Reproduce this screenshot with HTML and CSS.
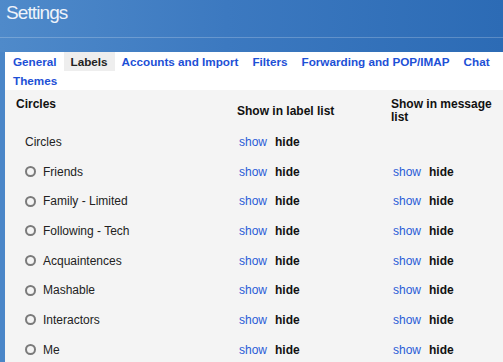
FILE: index.html
```html
<!DOCTYPE html>
<html>
<head>
<meta charset="utf-8">
<link rel="stylesheet" href="styles.css">
</head>
<body>
<div class="header">
  <div class="title-bar"><span class="title">Settings</span></div>
</div>
<div class="panel">
  <div class="tabs">
    <span class="tab">General</span>
    <span class="tab active">Labels</span>
    <span class="tab">Accounts and Import</span>
    <span class="tab">Filters</span>
    <span class="tab">Forwarding and POP/IMAP</span>
    <span class="tab">Chat</span>
    <span class="tab">Themes</span>
  </div>
  <div class="content">
    <div class="grid head">
      <div class="h-name">Circles</div>
      <div class="h-col">Show in label list</div>
      <div class="h-col">Show in message list</div>
    </div>
    <div class="grid row">
      <div class="name plain">Circles</div>
      <div class="acts"><span class="show">show</span><span class="hide">hide</span></div>
      <div class="acts"></div>
    </div>
    <div class="grid row">
      <div class="name"><span class="radio"></span>Friends</div>
      <div class="acts"><span class="show">show</span><span class="hide">hide</span></div>
      <div class="acts"><span class="show">show</span><span class="hide">hide</span></div>
    </div>
    <div class="grid row">
      <div class="name"><span class="radio"></span>Family - Limited</div>
      <div class="acts"><span class="show">show</span><span class="hide">hide</span></div>
      <div class="acts"><span class="show">show</span><span class="hide">hide</span></div>
    </div>
    <div class="grid row">
      <div class="name"><span class="radio"></span>Following - Tech</div>
      <div class="acts"><span class="show">show</span><span class="hide">hide</span></div>
      <div class="acts"><span class="show">show</span><span class="hide">hide</span></div>
    </div>
    <div class="grid row">
      <div class="name"><span class="radio"></span>Acquaintences</div>
      <div class="acts"><span class="show">show</span><span class="hide">hide</span></div>
      <div class="acts"><span class="show">show</span><span class="hide">hide</span></div>
    </div>
    <div class="grid row">
      <div class="name"><span class="radio"></span>Mashable</div>
      <div class="acts"><span class="show">show</span><span class="hide">hide</span></div>
      <div class="acts"><span class="show">show</span><span class="hide">hide</span></div>
    </div>
    <div class="grid row">
      <div class="name"><span class="radio"></span>Interactors</div>
      <div class="acts"><span class="show">show</span><span class="hide">hide</span></div>
      <div class="acts"><span class="show">show</span><span class="hide">hide</span></div>
    </div>
    <div class="grid row">
      <div class="name"><span class="radio"></span>Me</div>
      <div class="acts"><span class="show">show</span><span class="hide">hide</span></div>
      <div class="acts"><span class="show">show</span><span class="hide">hide</span></div>
    </div>
  </div>
</div>
</body>
</html>
```
FILE: styles.css
```css
html, body {
  margin: 0;
  padding: 0;
}
body {
  width: 503px;
  height: 362px;
  overflow: hidden;
  background: #4a86c8;
  font-family: "Liberation Sans", Arial, sans-serif;
  font-size: 12px;
  color: #222;
}
.header {
  height: 52px;
  background: linear-gradient(to right, #4f8aca 0%, #3c79c0 45%, #2c6bb5 100%);
}
.title-bar {
  height: 38px;
  border-bottom: 1px solid rgba(255, 255, 255, 0.22);
  padding-left: 6px;
  box-sizing: border-box;
}
.title {
  display: block;
  padding-top: 2px;
  font-size: 19px;
  line-height: 22px;
  letter-spacing: -0.9px;
  color: #eef3fa;
}
.panel {
  margin-left: 5px;
  background: #fff;
  height: 310px;
}
.tabs {
  display: flex;
  flex-wrap: wrap;
  padding-left: 1px;
}
.tab {
  padding: 0 7px;
  line-height: 19px;
  font-size: 11.7px;
  font-weight: bold;
  color: #1d50d6;
}
.tab.active {
  background: #eeeeee;
  color: #222;
}
.content {
  background: #f4f4f4;
  padding-left: 11px;
  height: 272px;
}
.grid {
  display: grid;
  grid-template-columns: 221px 154px 1fr;
}
.head {
  padding-top: 8px;
  padding-bottom: 3px;
  font-weight: bold;
  line-height: 13px;
  color: #111;
}
.h-col {
  align-self: center;
}
.row {
  height: 29.7px;
  align-items: center;
}
.name {
  display: flex;
  align-items: center;
  padding-left: 9px;
  color: #222;
}
.radio {
  width: 7px;
  height: 7px;
  border: 2px solid #7a7a7a;
  border-radius: 50%;
  margin-right: 7px;
}
.acts {
  display: flex;
  gap: 8px;
  padding-left: 2px;
}
.show {
  color: #2a5bd7;
}
.hide {
  font-weight: bold;
  color: #111;
}
```
